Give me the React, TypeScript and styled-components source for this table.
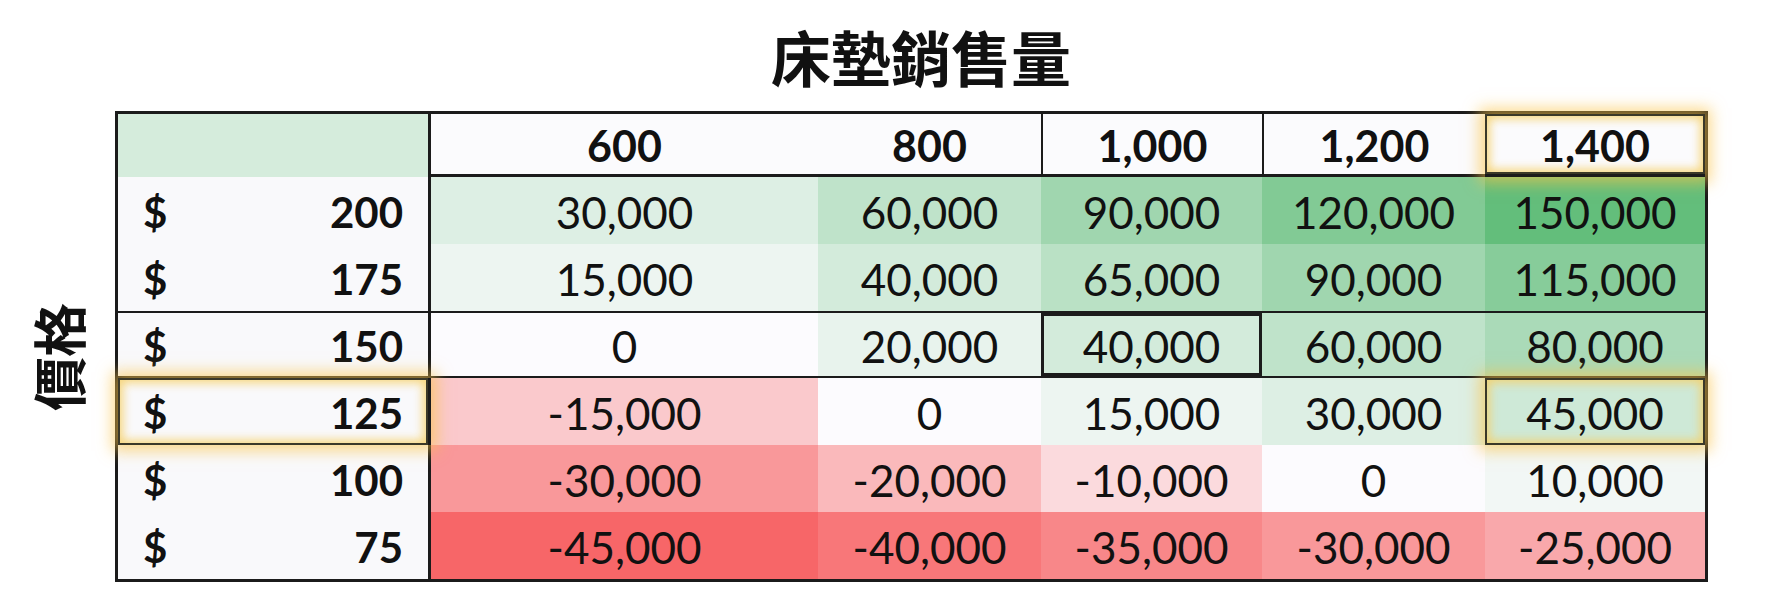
import React from 'react';
import styled, { createGlobalStyle, css } from 'styled-components';

const GlobalStyle = createGlobalStyle`
  html, body {
    margin: 0;
    padding: 0;
    background: #ffffff;
  }
  body {
    font-family: Lato, "Noto Sans", "Noto Sans CJK TC", sans-serif;
    color: #111111;
  }
  * { box-sizing: border-box; }
`;

const COLS = '313px 387px 223px 221px 223px 220px';
const LINE = '#1b1b1b';

const volumes = [600, 800, 1000, 1200, 1400];
const prices = [200, 175, 150, 125, 100, 75];

const PROFITS: Record<number, number[]> = {
  200: [30000, 60000, 90000, 120000, 150000],
  175: [15000, 40000, 65000, 90000, 115000],
  150: [0, 20000, 40000, 60000, 80000],
  125: [-15000, 0, 15000, 30000, 45000],
  100: [-30000, -20000, -10000, 0, 10000],
  75: [-45000, -40000, -35000, -30000, -25000],
};

const WHITE = [252, 251, 254];
const GREEN = [99, 190, 123];
const RED = [247, 102, 104];

const heat = (v: number) => {
  const t = v >= 0 ? Math.min(v / 150000, 1) : Math.min(-v / 45000, 1);
  const target = v >= 0 ? GREEN : RED;
  const c = WHITE.map((w, i) => Math.round(w + (target[i] - w) * t));
  return `rgb(${c[0]}, ${c[1]}, ${c[2]})`;
};

const fmt = (n: number) => n.toLocaleString('en-US');

const Page = styled.div`
  width: 1766px;
  height: 608px;
  display: flex;
  flex-direction: column;
  overflow: hidden;
`;

const TitleRow = styled.div`
  display: flex;
  padding-left: 115px;
  height: 111px;
`;

const Title = styled.h1`
  margin: 0;
  width: 1593px;
  padding: 26px 0 0 19px;
  text-align: center;
  font-family: "Noto Sans CJK TC", "Noto Sans CJK SC", sans-serif;
  font-weight: 700;
  font-size: 60px;
  line-height: 60px;
  color: #111;
`;

const Main = styled.div`
  display: flex;
  align-items: stretch;
`;

const AxisColumn = styled.div`
  width: 115px;
  display: flex;
  align-items: center;
  justify-content: center;
  padding-top: 20px;
`;

const AxisText = styled.span`
  display: inline-block;
  transform: rotate(-90deg);
  font-family: "Noto Sans CJK TC", "Noto Sans CJK SC", sans-serif;
  font-weight: 700;
  font-size: 54px;
  line-height: 1;
  white-space: nowrap;
  color: #111;
`;

const Table = styled.div`
  width: 1593px;
  border: 3px solid ${LINE};
  display: flex;
  flex-direction: column;
  background: #fafafc;
`;

const Row = styled.div<{ $h: number; $ruled?: boolean }>`
  display: grid;
  grid-template-columns: ${COLS};
  height: ${(p) => p.$h}px;
  ${(p) =>
    p.$ruled &&
    css`
      border-top: 2px solid ${LINE};
      border-bottom: 2px solid ${LINE};
    `}
`;

const glow = css`
  position: relative;
  z-index: 2;
  box-shadow:
    inset 0 0 0 2px #3a3828,
    inset 0 0 10px 5px rgba(246, 208, 105, 0.85),
    0 0 14px 6px rgba(250, 196, 72, 0.62);
`;

const Corner = styled.div`
  background: #d5ecdc;
  border-right: 3px solid ${LINE};
`;

const HeadCell = styled.div<{ $divider?: boolean; $glow?: boolean }>`
  display: flex;
  align-items: center;
  justify-content: center;
  background: #fbfbfd;
  border-bottom: 3px solid ${LINE};
  border-left: ${(p) => (p.$divider ? `2px solid ${LINE}` : 'none')};
  font-family: Lato, sans-serif;
  font-weight: 700;
  font-size: 43px;
  padding-top: 2px;
  ${(p) => p.$glow && glow}
`;

const PriceCell = styled.div<{ $glow?: boolean }>`
  display: flex;
  align-items: center;
  justify-content: space-between;
  padding: 2px 25px 0 25px;
  background: #f9f9fb;
  border-right: 3px solid ${LINE};
  font-family: Lato, sans-serif;
  font-weight: 700;
  font-size: 42px;
  ${(p) => p.$glow && glow}
`;

const ValueCell = styled.div<{ $bg: string; $glow?: boolean; $boxed?: boolean }>`
  display: flex;
  align-items: center;
  justify-content: center;
  background: ${(p) => p.$bg};
  font-family: Lato, sans-serif;
  font-weight: 400;
  font-size: 44px;
  padding-top: 3px;
  ${(p) =>
    p.$boxed &&
    css`
      position: relative;
      z-index: 1;
      box-shadow: inset 0 0 0 3px ${LINE};
    `}
  ${(p) => p.$glow && glow}
`;

export default function App() {
  return (
    <Page>
      <GlobalStyle />
      <TitleRow>
        <Title>床墊銷售量</Title>
      </TitleRow>
      <Main>
        <AxisColumn>
          <AxisText>價格</AxisText>
        </AxisColumn>
        <Table>
          <Row $h={63}>
            <Corner />
            {volumes.map((v, i) => (
              <HeadCell key={v} $divider={i >= 2 && i < 4} $glow={v === 1400}>
                {fmt(v)}
              </HeadCell>
            ))}
          </Row>
          {prices.map((p) => (
            <Row key={p} $h={67} $ruled={p === 150}>
              <PriceCell $glow={p === 125}>
                <span>$</span>
                <span>{p}</span>
              </PriceCell>
              {PROFITS[p].map((val, i) => (
                <ValueCell
                  key={volumes[i]}
                  $bg={heat(val)}
                  $boxed={p === 150 && volumes[i] === 1000}
                  $glow={p === 125 && volumes[i] === 1400}
                >
                  {fmt(val)}
                </ValueCell>
              ))}
            </Row>
          ))}
        </Table>
      </Main>
    </Page>
  );
}
